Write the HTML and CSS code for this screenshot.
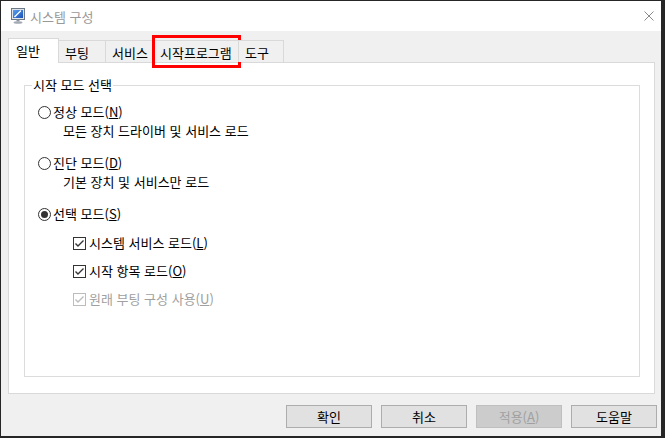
FILE: index.html
```html
<!DOCTYPE html>
<html lang="ko">
<head>
<meta charset="utf-8">
<title>시스템 구성</title>
<link rel="stylesheet" href="styles.css">
</head>
<body>
<div class="window">
  <div class="titlebar">
    <svg class="app-icon" viewBox="0 0 16 16" width="16" height="16">
      <defs>
        <linearGradient id="scr" x1="0" y1="0" x2="1" y2="1">
          <stop offset="0" stop-color="#5aa0f0"/>
          <stop offset="1" stop-color="#1a4fb8"/>
        </linearGradient>
      </defs>
      <rect x="1.5" y="0.5" width="13" height="11" fill="#dfe4ea" stroke="#6d7886"/>
      <rect x="3" y="2" width="10" height="8" fill="url(#scr)"/>
      <path d="M5 8.5 L10.5 3" stroke="#ffffff" stroke-width="1.3" stroke-linecap="round"/>
      <path d="M4.5 9 L5.5 7.2" stroke="#e8f0ff" stroke-width="1"/>
      <rect x="6.5" y="11.5" width="3" height="2" fill="#8a929c"/>
      <ellipse cx="8" cy="14.5" rx="4.5" ry="1.3" fill="#a3aab3"/>
    </svg>
    <span class="title">시스템 구성</span>
    <svg class="close" viewBox="0 0 10 10" width="10" height="10">
      <path d="M0.5 0.5 L9.5 9.5 M9.5 0.5 L0.5 9.5" stroke="#8a8a8a" stroke-width="1"/>
    </svg>
  </div>
  <div class="client">
    <div class="tabs">
      <div class="tab selected w-general">일반</div>
      <div class="tab w-boot">부팅</div>
      <div class="tab w-service">서비스</div>
      <div class="tab w-startup">시작프로그램<span class="highlight"></span></div>
      <div class="tab w-tools">도구</div>
    </div>
    <div class="panel">
      <fieldset class="group">
        <legend>시작 모드 선택</legend>
        <div class="group-body">
          <div class="mode">
            <div class="row"><span class="radio"></span><span>정상 모드(<u>N</u>)</span></div>
            <div class="desc">모든 장치 드라이버 및 서비스 로드</div>
          </div>
          <div class="mode">
            <div class="row"><span class="radio"></span><span>진단 모드(<u>D</u>)</span></div>
            <div class="desc">기본 장치 및 서비스만 로드</div>
          </div>
          <div class="mode">
            <div class="row"><span class="radio checked"></span><span>선택 모드(<u>S</u>)</span></div>
            <div class="checks">
              <div class="row"><span class="checkbox"><svg viewBox="0 0 13 13" width="13" height="13"><path d="M2.5 6.5 L5 9 L10.5 3.5" fill="none" stroke="#333" stroke-width="1.4"/></svg></span><span>시스템 서비스 로드(<u>L</u>)</span></div>
              <div class="row"><span class="checkbox"><svg viewBox="0 0 13 13" width="13" height="13"><path d="M2.5 6.5 L5 9 L10.5 3.5" fill="none" stroke="#333" stroke-width="1.4"/></svg></span><span>시작 항목 로드(<u>O</u>)</span></div>
              <div class="row disabled"><span class="checkbox"><svg viewBox="0 0 13 13" width="13" height="13"><path d="M2.5 6.5 L5 9 L10.5 3.5" fill="none" stroke="#bcbcbc" stroke-width="1.4"/></svg></span><span>원래 부팅 구성 사용(<u>U</u>)</span></div>
            </div>
          </div>
        </div>
      </fieldset>
    </div>
    <div class="buttons">
      <button class="btn">확인</button>
      <button class="btn">취소</button>
      <button class="btn" disabled>적용(<u>A</u>)</button>
      <button class="btn">도움말</button>
    </div>
  </div>
</div>
</body>
</html>
```
FILE: styles.css
```css
* { box-sizing: border-box; }
html, body { margin: 0; padding: 0; }
body {
  background: #262626;
  width: 665px;
  height: 438px;
  overflow: hidden;
  font-family: "Noto Sans CJK KR", "Noto Sans", sans-serif;
  font-size: 13px;
  color: #000;
}
.window {
  margin: 1px 0 0 1px;
  width: 660px;
  height: 435px;
  background: #f0f0f0;
  display: flex;
  flex-direction: column;
}
.titlebar {
  height: 30px;
  background: #fff;
  display: flex;
  align-items: center;
  padding-left: 9px;
}
.app-icon { flex: none; }
.title {
  margin-left: 4px;
  color: #999;
  font-size: 13px;
}
.close {
  margin-left: auto;
  margin-right: 7px;
}
.client {
  flex: 1;
  display: flex;
  flex-direction: column;
  padding: 7px 6px 0 7px;
}
.tabs {
  display: flex;
  align-items: flex-end;
  height: 24px;
  position: relative;
  z-index: 1;
}
.tab {
  position: relative;
  height: 22px;
  border: 1px solid #d9d9d9;
  border-bottom: none;
  margin-left: -1px;
  background: #f0f0f0;
  display: flex;
  align-items: center;
  justify-content: flex-start;
  line-height: 1;
  padding: 1px 0 0 6px;
}
.tab:first-child { margin-left: 0; }
.tab.selected {
  height: 25px;
  margin-bottom: -1px;
  background: #fff;
  padding: 0 0 1px 7px;
}
.w-general { width: 51px; }
.w-boot { width: 48px; }
.w-service { width: 48px; }
.w-startup { width: 87px; padding-left: 7px; }
.w-tools { width: 46px; }
.highlight {
  position: absolute;
  left: -1px;
  top: -6px;
  width: 89px;
  height: 33px;
  border: 3px solid #ff0000;
}
.panel {
  height: 332px;
  border: 1px solid #d9d9d9;
  background: #fff;
  padding: 14px 14px 16px 15px;
}
.group {
  margin: 0;
  height: 100%;
  border: 1px solid #dcdcdc;
  padding: 0;
}
.group legend {
  margin-left: 7px;
  padding: 0 1px;
  line-height: 16px;
}
.group-body {
  padding: 10px 0 0 13px;
}
.row {
  display: flex;
  align-items: center;
  height: 18px;
  line-height: 18px;
}
.mode + .mode { margin-top: 14px; }
.desc {
  margin-top: 1px;
  margin-left: 25px;
  height: 18px;
  line-height: 18px;
}
.radio {
  width: 13px;
  height: 13px;
  border: 1px solid #333;
  border-radius: 50%;
  margin-right: 2px;
  display: flex;
  align-items: center;
  justify-content: center;
  flex: none;
}
.radio.checked::after {
  content: "";
  width: 7px;
  height: 7px;
  border-radius: 50%;
  background: #333;
}
.checks {
  margin-top: 11px;
  margin-left: 35px;
  display: flex;
  flex-direction: column;
  gap: 10px;
}
.checkbox {
  width: 13px;
  height: 13px;
  border: 1px solid #333;
  margin-right: 3px;
  flex: none;
  display: flex;
}
.checkbox svg { margin: -1px; }
.disabled { color: #a0a0a0; }
.disabled .checkbox { border-color: #bcbcbc; }
u { text-underline-offset: 1px; }
.buttons {
  margin-top: 11px;
  margin-right: -2px;
  display: flex;
  justify-content: flex-end;
  gap: 9px;
}
.btn {
  width: 86px;
  height: 23px;
  border: 1px solid #adadad;
  background: #e1e1e1;
  font-family: "Noto Sans CJK KR", "Noto Sans", sans-serif;
  font-size: 13px;
  color: #000;
  padding: 0;
  margin: 0;
  line-height: 1;
}
.btn:disabled {
  background: #cccccc;
  border-color: #bfbfbf;
  color: #a0a0a0;
}
```
